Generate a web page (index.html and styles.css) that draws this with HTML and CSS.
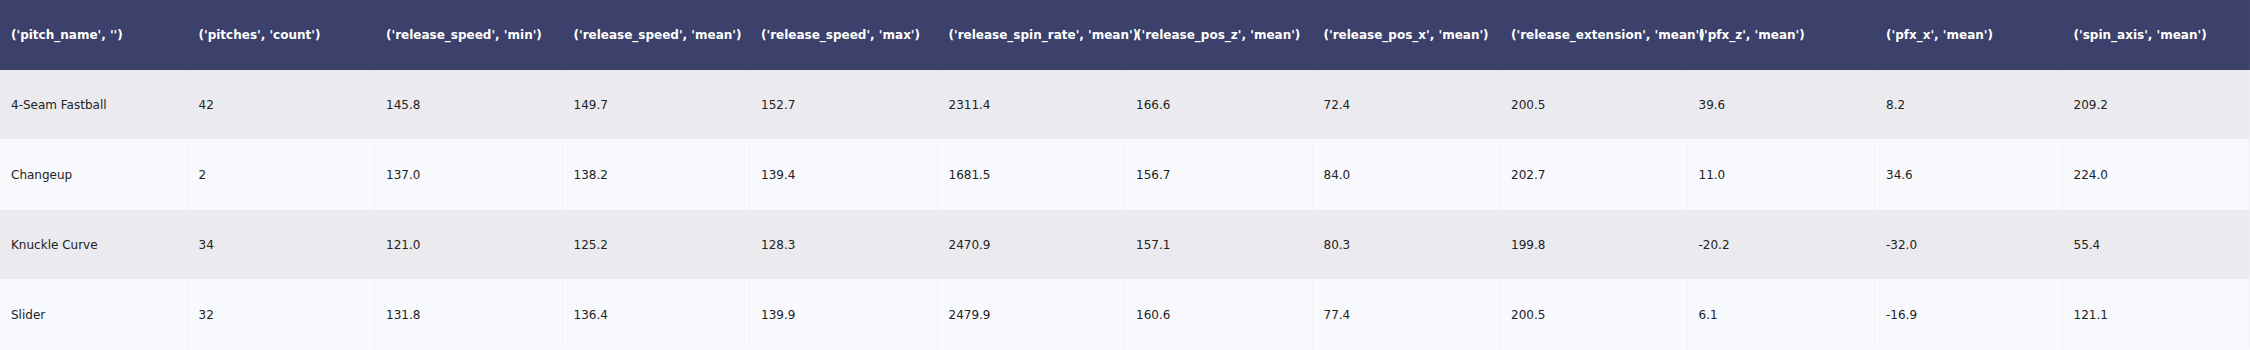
FILE: index.html
```html
<!DOCTYPE html>
<html lang="en">
<head>
    <meta charset="utf-8">
    <title>Pitch table</title>
    <link rel="stylesheet" href="styles.css">
</head>
<body>
    <div class="tabel">
        <div class="rad hoved">
            <div class="celle">('pitch_name', '')</div>
            <div class="celle">('pitches', 'count')</div>
            <div class="celle">('release_speed', 'min')</div>
            <div class="celle">('release_speed', 'mean')</div>
            <div class="celle">('release_speed', 'max')</div>
            <div class="celle">('release_spin_rate', 'mean')</div>
            <div class="celle">('release_pos_z', 'mean')</div>
            <div class="celle">('release_pos_x', 'mean')</div>
            <div class="celle">('release_extension', 'mean')</div>
            <div class="celle">('pfx_z', 'mean')</div>
            <div class="celle">('pfx_x', 'mean')</div>
            <div class="celle">('spin_axis', 'mean')</div>
        </div>

        <div class="rad ulige">
            <div class="celle">4-Seam Fastball</div>
            <div class="celle">42</div>
            <div class="celle">145.8</div>
            <div class="celle">149.7</div>
            <div class="celle">152.7</div>
            <div class="celle">2311.4</div>
            <div class="celle">166.6</div>
            <div class="celle">72.4</div>
            <div class="celle">200.5</div>
            <div class="celle">39.6</div>
            <div class="celle">8.2</div>
            <div class="celle">209.2</div>
        </div>

        <div class="rad lige">
            <div class="celle">Changeup</div>
            <div class="celle">2</div>
            <div class="celle">137.0</div>
            <div class="celle">138.2</div>
            <div class="celle">139.4</div>
            <div class="celle">1681.5</div>
            <div class="celle">156.7</div>
            <div class="celle">84.0</div>
            <div class="celle">202.7</div>
            <div class="celle">11.0</div>
            <div class="celle">34.6</div>
            <div class="celle">224.0</div>
        </div>

        <div class="rad ulige">
            <div class="celle">Knuckle Curve</div>
            <div class="celle">34</div>
            <div class="celle">121.0</div>
            <div class="celle">125.2</div>
            <div class="celle">128.3</div>
            <div class="celle">2470.9</div>
            <div class="celle">157.1</div>
            <div class="celle">80.3</div>
            <div class="celle">199.8</div>
            <div class="celle">-20.2</div>
            <div class="celle">-32.0</div>
            <div class="celle">55.4</div>
        </div>

        <div class="rad lige">
            <div class="celle">Slider</div>
            <div class="celle">32</div>
            <div class="celle">131.8</div>
            <div class="celle">136.4</div>
            <div class="celle">139.9</div>
            <div class="celle">2479.9</div>
            <div class="celle">160.6</div>
            <div class="celle">77.4</div>
            <div class="celle">200.5</div>
            <div class="celle">6.1</div>
            <div class="celle">-16.9</div>
            <div class="celle">121.1</div>
        </div>
    </div>
</body>
</html>
```

FILE: styles.css
```css
body {
    margin: 0;
    background-color: white;
    font-family: Verdana, 'DejaVu Sans', sans-serif;
    font-size: 12px;
}

.tabel {
    display: flex;
    flex-direction: column;
    width: 2250px;
}

/* the row carries the fill, so long header text can run over the next cell */
.rad {
    display: grid;
    grid-template-columns: repeat(12, 187.5px);
    height: 70px;
    color: #222222;
}

.celle {
    display: flex;
    align-items: center;
    min-width: 0;
    padding-left: 11px;
    white-space: nowrap;
    border-right: 1px solid #f1f2f5;
    border-bottom: 1px solid #f8f9fc;
}

.hoved {
    background-color: #3b416b;
    color: white;
    font-weight: bold;
}

.hoved .celle {
    border-right-color: #40456f;
    border-bottom-color: #3b416b;
}

.ulige {
    background-color: #ebebef;
}

.ulige .celle {
    border-right-color: #eeeef2;
}

.lige {
    background-color: #f8f9fc;
}
```
